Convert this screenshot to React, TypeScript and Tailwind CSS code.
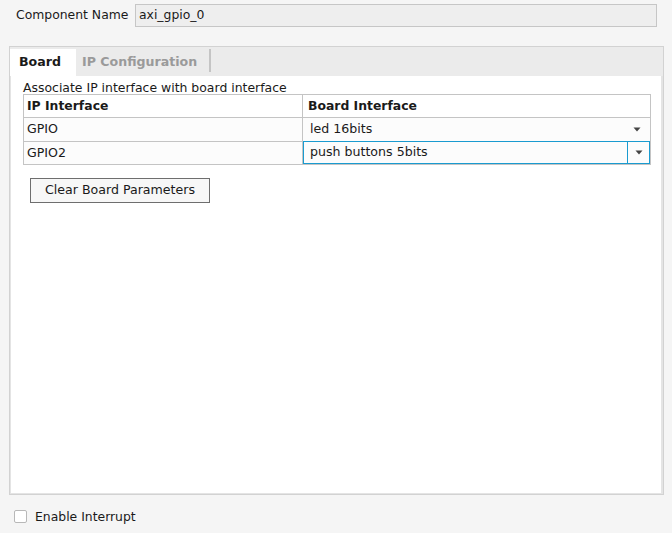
import React from "react";

function Arrow() {
  return (
    <svg width="8" height="5" viewBox="0 0 8 5" className="block">
      <path d="M0.5 0.5 L7.5 0.5 L4 4.5 Z" fill="#444" />
    </svg>
  );
}

export default function App() {
  return (
    <div
      className="w-[672px] h-[533px] bg-[#f5f5f5] text-[12px] text-[#1a1a1a] flex flex-col overflow-hidden"
      style={{ fontFamily: '"DejaVu Sans", sans-serif' }}
    >
      {/* Component name row */}
      <div className="flex items-center h-[23px] mt-[4px] text-[12.4px]">
        <span className="ml-[16px] w-[119px]">Component Name</span>
        <div className="w-[522px] h-[23px] border border-[#c6c6c6] bg-[#eeeeee] flex items-center pl-[3px]">
          axi_gpio_0
        </div>
      </div>

      {/* Tab panel */}
      <div className="ml-[9px] mt-[19px] w-[655px] h-[449px] border border-[#d2d2d2] flex flex-col text-[12.6px]">
        <div className="h-[29px] bg-[#ebebeb] flex items-end">
          <div className="w-[66px] h-[27px] bg-white font-bold flex items-center pl-[9px]">Board</div>
          <div className="h-[27px] flex items-center pl-[6px] pr-[12px] font-bold text-[#9a9a9a]">
            IP Configuration
          </div>
          <div className="w-[2px] h-[23px] bg-[#c4c4c4] mb-[4px]" />
        </div>
        <div className="flex-1 bg-white border-l border-l-[#e4e4e4] border-r-2 border-r-[#e4e4e4] border-b border-b-[#e4e4e4]">
          <div className="ml-[12px] mt-[5px] h-[13px] leading-[13px] text-[12.45px]">Associate IP interface with board interface</div>
          <div className="ml-[12px] w-[628px] border border-[#c4c4c4] bg-[#fcfcfc]">
            <div className="flex h-[23px] border-b border-[#c4c4c4] bg-white font-bold text-[12.4px]">
              <div className="w-[279px] border-r border-[#c4c4c4] pl-[3px] flex items-center">IP Interface</div>
              <div className="flex-1 pl-[5px] flex items-center">Board Interface</div>
            </div>
            <div className="flex h-[24px] border-b border-[#c4c4c4]">
              <div className="w-[279px] border-r border-[#c4c4c4] pl-[3px] flex items-center">GPIO</div>
              <div className="flex-1 pl-[7px] flex items-center justify-between pr-[9px]">
                <span>led 16bits</span>
                <Arrow />
              </div>
            </div>
            <div className="flex h-[22px]">
              <div className="w-[279px] border-r border-[#c4c4c4] pl-[3px] flex items-center">GPIO2</div>
              <div className="flex-1 flex border border-[#1a9bd0] -mt-[1px] -mb-[1px] h-[23px]">
                <div className="flex-1 pl-[6px] flex items-center border-r border-[#1a9bd0]">push buttons 5bits</div>
                <div className="w-[21px] flex items-center justify-center">
                  <Arrow />
                </div>
              </div>
            </div>
          </div>
          <div className="ml-[19px] mt-[13px] w-[180px] h-[25px] border border-[#6e6e6e] bg-[#f7f7f7] flex items-center justify-center">
            Clear Board Parameters
          </div>
        </div>
      </div>

      {/* Enable interrupt */}
      <div className="flex items-center mt-[15px] ml-[14px] h-[13px] leading-[13px] text-[12.4px]">
        <div className="w-[13px] h-[13px] border border-[#b8b8b8] rounded-[2px] bg-white" />
        <span className="ml-[8px]">Enable Interrupt</span>
      </div>
    </div>
  );
}
